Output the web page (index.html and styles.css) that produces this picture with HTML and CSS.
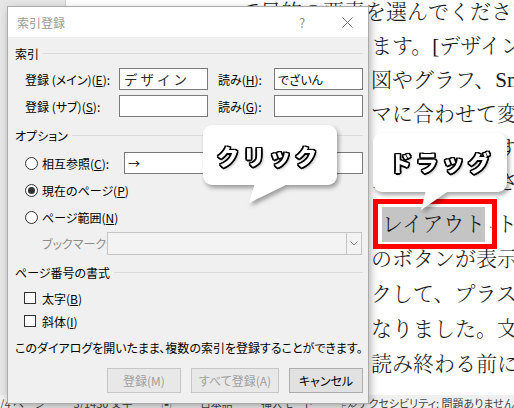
FILE: index.html
```html
<!DOCTYPE html>
<html lang="ja">
<head>
<meta charset="utf-8">
<title>索引登録</title>
<link rel="stylesheet" href="styles.css">
</head>
<body>
<div class="screen">
  <div class="app">
    <div class="gutter"></div>
    <div class="page">
      <div class="line first">て目的の要素を選んでください。</div>
      <div class="line">ます。[デザイン]タブ</div>
      <div class="line">図やグラフ、SmartArt</div>
      <div class="line">マに合わせて変わります</div>
      <div class="line">テーマを変更すると</div>
      <div class="line">ボタンが表示されます</div>
      <div class="line sel"><span class="mark">·</span><span class="hl">レイアウト</span><span class="mark">·</span>ト</div>
      <div class="line low">のボタンが表示されます</div>
      <div class="line low">クして、プラス記号</div>
      <div class="line low">なりました。文書</div>
      <div class="line low">読み終わる前に中</div>
    </div>
  </div>
  <div class="status">
    <div class="st-left">
      <span class="st-pages">1/4 ページ</span>
      <span class="st-words">3/1430 文字</span>
      <span class="st-ic">▣</span>
      <span class="st-lang">日本語</span>
      <span class="st-mode">挿入モード</span>
      <span class="st-ic">▤</span>
    </div>
    <div class="st-acc">
      <svg class="acc-ic" width="11" height="11" viewBox="0 0 11 11"><circle cx="4.5" cy="2" r="1.3" fill="none" stroke="#444" stroke-width="1"/><path d="M1 4.5h7M4.5 4.5v3M4.5 7.5l-2 3M4.5 7.5l2 3" fill="none" stroke="#444" stroke-width="1"/><path d="M6.5 8.5l1.3 1.3 2.7-2.8" fill="none" stroke="#444" stroke-width="1"/></svg>
      <span>アクセシビリティ: 問題ありません</span>
    </div>
  </div>

  <div class="dialog">
    <div class="titlebar">
      <span class="title">索引登録</span>
      <span class="help">?</span>
      <span class="close"><svg width="11" height="11" viewBox="0 0 11 11"><path d="M0.5 0.5l10 10M10.5 0.5l-10 10" stroke="#777" stroke-width="1" fill="none"/></svg></span>
    </div>
    <div class="body">
      <div class="group g1">索引</div>
      <div class="row r1">
        <span class="lbl">登録 (メイン)(<u>E</u>):</span>
        <span class="field"><span class="big">デザイン</span></span>
        <span class="lbl2">読み(<u>H</u>):</span>
        <span class="field">でざいん</span>
      </div>
      <div class="row r2">
        <span class="lbl">登録 (サブ)(<u>S</u>):</span>
        <span class="field"></span>
        <span class="lbl2">読み(<u>G</u>):</span>
        <span class="field"></span>
      </div>

      <div class="group g2">オプション</div>
      <div class="opt o1">
        <span class="radio"></span>
        <span class="lbl3">相互参照(<u>C</u>):</span>
        <span class="field wide">→</span>
      </div>
      <div class="opt o2">
        <span class="radio on"></span>
        <span>現在のページ(<u>P</u>)</span>
      </div>
      <div class="opt o3">
        <span class="radio"></span>
        <span>ページ範囲(<u>N</u>)</span>
      </div>
      <div class="bm">
        <span class="bm-lbl">ブックマーク:</span>
        <span class="combo"><span class="arrow"><svg width="8" height="5" viewBox="0 0 8 5"><path d="M0.5 0.5l3.5 3.5 3.5-3.5" stroke="#808080" stroke-width="1" fill="none"/></svg></span></span>
      </div>

      <div class="group g3">ページ番号の書式</div>
      <div class="chk c1"><span class="box"></span><span>太字(<u>B</u>)</span></div>
      <div class="chk c2"><span class="box"></span><span>斜体(<u>I</u>)</span></div>

      <div class="info">このダイアログを開いたまま、複数の索引を登録することができます。</div>

      <div class="buttons">
        <span class="btn dis b1">登録(M)</span>
        <span class="btn dis b2">すべて登録(A)</span>
        <span class="btn b3">キャンセル</span>
      </div>
    </div>
  </div>

  <div class="redbox"></div>

  <div class="bubble click">
    <div class="bbox"><span class="btext">クリック</span></div>
    <div class="tail"></div>
  </div>
  <div class="bubble drag">
    <div class="bbox"><span class="btext">ドラッグ</span></div>
    <div class="tail"></div>
  </div>
</div>
</body>
</html>
```

FILE: styles.css
```css
* { box-sizing: border-box; margin: 0; padding: 0; }

body {
  width: 514px;
  height: 408px;
  overflow: hidden;
  font-family: "Noto Sans CJK JP", sans-serif;
}

.screen {
  position: relative;
  width: 514px;
  height: 408px;
  overflow: hidden;
  background: #e6e6e6;
}

/* Word document background */
.app {
  display: flex;
  height: 395px;
}
.gutter {
  width: 66px;
  background: #e6e6e6;
  border-right: 1px solid #cfcfcf;
}
.page {
  flex: 1;
  background: #fff;
  padding-left: 305px;
  overflow: hidden;
  font-family: "Liberation Serif", "Noto Serif CJK JP", "Noto Sans CJK JP", serif;
  font-weight: 300;
  font-size: 21px;
  color: #1a1a1a;
}
.line {
  height: 34px;
  line-height: 34px;
  white-space: nowrap;
}
.line.first {
  margin-top: -5px;
  margin-left: -132px;
}
.line.sel {
  margin-top: 8px;
  height: 35px;
  line-height: 35px;
}
.line.low {
  height: 35px;
  line-height: 35px;
}
.mark {
  display: inline-block;
  width: 11px;
  text-align: center;
  font-size: 12px;
  color: #555;
}
.hl {
  display: inline-block;
  height: 35px;
  background: #c4c4c4;
}

/* status bar */
.status {
  display: flex;
  height: 13px;
  background: #f0f0f0;
  font-size: 11px;
  line-height: 16px;
  color: #444;
  white-space: nowrap;
  font-feature-settings: "palt";
}
.st-left {
  width: 361px;
  display: flex;
  gap: 28px;
  margin-left: -6px;
  overflow: hidden;
}
.st-acc {
  display: flex;
  align-items: flex-start;
  gap: 2px;
}
.acc-ic { margin-top: 2px; }

/* dialog */
.dialog {
  position: absolute;
  left: 8px;
  top: 7px;
  width: 360px;
  height: 396px;
  background: #f0f0f0;
  box-shadow: 0 0 0 1px #ababab, 2px 3px 9px rgba(0, 0, 0, 0.35);
  font-size: 12px;
  color: #000;
  font-feature-settings: "palt";
  display: flex;
  flex-direction: column;
}
.titlebar {
  height: 30px;
  background: #fff;
  display: flex;
  align-items: center;
  padding-left: 9px;
  color: #9a9a9a;
}
.title { flex: 1; }
.help {
  width: 20px;
  text-align: center;
  color: #8c8c8c;
  font-size: 13px;
}
.close {
  width: 20px;
  margin-left: 25px;
  margin-right: 11px;
  display: flex;
  justify-content: center;
}
.body {
  flex: 1;
  padding: 0 5px 0 7px;
  display: flex;
  flex-direction: column;
}
.group {
  display: flex;
  align-items: center;
  height: 20px;
  white-space: nowrap;
}
.group::after {
  content: "";
  flex: 1;
  height: 1px;
  background: #dcdcdc;
  margin-left: 4px;
}
.g1 { margin-top: 6px; }
.g2 { margin-top: 8px; }
.g3 { margin-top: 7px; }

.row {
  display: flex;
  align-items: center;
  height: 22px;
  padding-left: 10px;
  margin-top: 5px;
  white-space: nowrap;
}
.lbl { width: 94px; }
.lbl2 { width: 56px; margin-left: 10px; }
.field {
  width: 89px;
  height: 22px;
  background: #fff;
  border: 1px solid #7a7a7a;
  display: flex;
  align-items: center;
  padding-left: 3px;
  white-space: nowrap;
}
.field.wide { flex: 1; width: auto; }
.big {
  font-size: 13.5px;
  font-weight: 400;
  letter-spacing: 3px;
  color: #2a2a2a;
  font-feature-settings: normal;
  padding-left: 1px;
}

.opt {
  display: flex;
  align-items: center;
  height: 22px;
  padding-left: 10px;
  margin-top: 5px;
  white-space: nowrap;
}
.o1 { margin-top: 7px; }
.radio {
  width: 13px;
  height: 13px;
  border: 1px solid #333;
  border-radius: 50%;
  background: #fff;
  margin-right: 4px;
  display: flex;
  align-items: center;
  justify-content: center;
}
.radio.on::after {
  content: "";
  width: 7px;
  height: 7px;
  border-radius: 50%;
  background: #333;
}
.lbl3 { width: 82px; }

.bm {
  display: flex;
  align-items: center;
  height: 23px;
  margin-top: 4px;
  padding-left: 27px;
}
.bm-lbl {
  width: 65px;
  color: #8d8d8d;
  white-space: nowrap;
}
.combo {
  flex: 1;
  height: 23px;
  margin-right: 1px;
  border: 1px solid #c4c4c4;
  background: #f3f3f3;
  display: flex;
  justify-content: flex-end;
}
.combo .arrow {
  width: 15px;
  border-left: 1px solid #c4c4c4;
  display: flex;
  align-items: center;
  justify-content: center;
}

.chk {
  display: flex;
  align-items: center;
  height: 20px;
  padding-left: 9px;
  white-space: nowrap;
}
.c1 { margin-top: 6px; }
.c2 { margin-top: 3px; }
.box {
  width: 12px;
  height: 12px;
  border: 1px solid #333;
  background: #fff;
  margin-right: 6px;
}

.info {
  height: 20px;
  line-height: 20px;
  margin-top: 7px;
  white-space: nowrap;
}

.buttons {
  display: flex;
  justify-content: flex-end;
  gap: 10px;
  margin-top: 10px;
}
.btn {
  height: 25px;
  border: 1px solid #adadad;
  background: #e1e1e1;
  display: flex;
  align-items: center;
  justify-content: center;
  white-space: nowrap;
}
.btn.dis {
  border-color: #c6c6c6;
  background: #e8e8e8;
  color: #a0a0a0;
}
.b1 { width: 74px; }
.b2 { width: 88px; }
.b3 { width: 74px; }

/* annotations */
.redbox {
  position: absolute;
  left: 373px;
  top: 199px;
  width: 124px;
  height: 50px;
  border: 5px solid #ff0000;
}
.bubble {
  position: absolute;
  filter: drop-shadow(2px 3px 2px rgba(0, 0, 0, 0.35));
}
.bbox {
  width: 134px;
  height: 60px;
  background: #fff;
  border-radius: 9px;
  display: flex;
  align-items: center;
  justify-content: center;
}
.tail {
  position: absolute;
  background: #fff;
}
.click { left: 203px; top: 125px; }
.click .bbox { padding-right: 6px; }
.click .tail {
  left: 46px;
  top: 58px;
  width: 41px;
  height: 20px;
  clip-path: polygon(6px 0, 41px 0, 0 20px);
}
.drag { left: 373px; top: 133px; }
.drag .bbox { height: 59px; padding-bottom: 4px; }
.drag .tail {
  left: 48px;
  top: 57px;
  width: 29px;
  height: 20px;
  clip-path: polygon(5px 0, 29px 0, 0 20px);
}
.btext {
  font-family: "Noto Sans CJK JP", sans-serif;
  font-weight: 900;
  font-size: 22px;
  letter-spacing: 4px;
  padding-left: 4px;
  color: #fff;
  text-shadow:
    1.5px 0 0 #000, -1.5px 0 0 #000, 0 1.5px 0 #000, 0 -1.5px 0 #000,
    1px 1px 0 #000, -1px 1px 0 #000, 1px -1px 0 #000, -1px -1px 0 #000,
    1.5px 1px 0 #000, -1.5px 1px 0 #000, 1.5px -1px 0 #000, -1.5px -1px 0 #000,
    2px 2px 3px rgba(0, 0, 0, 0.3);
}
```
